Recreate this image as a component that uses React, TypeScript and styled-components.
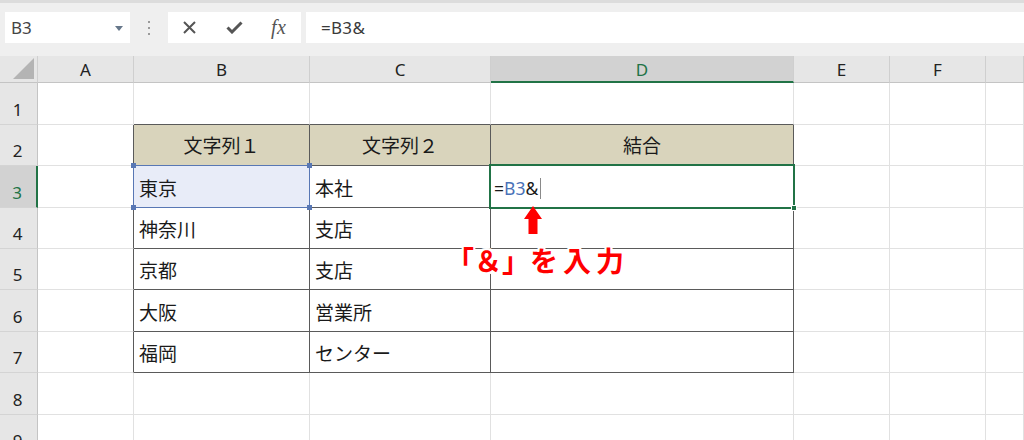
import React from "react";
import styled, { createGlobalStyle, css } from "styled-components";

const GlobalStyle = createGlobalStyle`
  html, body { margin: 0; padding: 0; background: #ffffff; overflow: hidden; }
  body { font-family: "Noto Sans", "Noto Sans CJK JP", sans-serif; width: 1024px; height: 440px; }
  * { box-sizing: border-box; }
`;

const Page = styled.div`
  position: relative;
  width: 1024px;
  height: 440px;
  overflow: hidden;
  background: #fff;
`;

const Toolbar = styled.div`
  height: 56px;
  background: #efefef;
  border-top: 3px solid #dcdcdc;
  display: flex;
  align-items: flex-start;
  padding-top: 9px;
  padding-left: 5px;
`;

const NameBox = styled.div`
  width: 125px;
  height: 31px;
  background: #fff;
  display: flex;
  align-items: center;
  justify-content: space-between;
  padding: 0 7px 0 6px;
  font-family: "Noto Sans", sans-serif;
  font-size: 17px;
  color: #444;
`;

const DropTri = styled.span`
  width: 0;
  height: 0;
  border-left: 4px solid transparent;
  border-right: 4px solid transparent;
  border-top: 5px solid #66778a;
  margin-top: 1px;
`;

const Dots = styled.div`
  width: 38px;
  height: 31px;
  display: flex;
  flex-direction: column;
  align-items: center;
  justify-content: center;
  gap: 4px;
`;

const Dot = styled.span`
  width: 2px;
  height: 2px;
  background: #9a9a9a;
`;

const FuncBox = styled.div`
  width: 133px;
  height: 31px;
  background: #fff;
  display: flex;
  align-items: center;
  padding-left: 14px;
`;

const FuncBtn = styled.div<{ $w: number }>`
  width: ${(p) => p.$w}px;
  height: 31px;
  display: flex;
  align-items: center;
  justify-content: flex-start;
  color: #555;
`;

const Fx = styled.span`
  font-family: "Liberation Serif", "DejaVu Serif", serif;
  font-style: italic;
  font-size: 20px;
  color: #555;
  margin-left: 2px;
  letter-spacing: 0.5px;
`;

const FormulaBox = styled.div`
  flex: 1;
  margin-left: 5px;
  height: 31px;
  background: #fff;
  display: flex;
  align-items: center;
  padding-left: 15px;
  font-family: "Noto Sans", sans-serif;
  font-size: 17px;
  letter-spacing: 0.3px;
  color: #3a3a3a;
`;

const Sheet = styled.div`
  display: grid;
  grid-template-columns: 38px 96px 176px 181px 303px 96px 96px 1fr;
  grid-template-rows: 27px 42px 41px 42px 41px 41px 42px 41px 42px 41px;
`;

const Corner = styled.div`
  background: #e6e6e6;
  border-right: 1px solid #d0d0d0;
  border-bottom: 1px solid #c4c4c4;
  position: relative;
`;

const CornerTri = styled.span`
  position: absolute;
  right: 3px;
  bottom: 3px;
  width: 0;
  height: 0;
  border-left: 21px solid transparent;
  border-bottom: 21px solid #b4b4b4;
`;

const ColHead = styled.div<{ $sel?: boolean }>`
  background: ${(p) => (p.$sel ? "#d2d2d2" : "#e6e6e6")};
  border-right: 1px solid #cfcfcf;
  border-bottom: ${(p) => (p.$sel ? "2px solid #217346" : "1px solid #c4c4c4")};
  display: flex;
  align-items: center;
  justify-content: center;
  padding-top: 1px;
  font-family: "Noto Sans", sans-serif;
  font-size: 17px;
  color: ${(p) => (p.$sel ? "#217346" : "#222")};
`;

const RowHead = styled.div<{ $sel?: boolean }>`
  background: ${(p) => (p.$sel ? "#d2d2d2" : "#e6e6e6")};
  border-right: ${(p) => (p.$sel ? "2px solid #217346" : "1px solid #c4c4c4")};
  border-bottom: 1px solid #d4d4d4;
  display: flex;
  align-items: flex-end;
  justify-content: center;
  padding-bottom: 3px;
  padding-right: 2px;
  font-family: "Noto Sans", sans-serif;
  font-size: 17px;
  color: ${(p) => (p.$sel ? "#217346" : "#222")};
`;

const Cell = styled.div<{
  $right: string;
  $bottom: string;
  $bg?: string;
  $head?: boolean;
}>`
  position: relative;
  background: ${(p) => p.$bg || "#fff"};
  border-right: 1px solid ${(p) => p.$right};
  border-bottom: 1px solid ${(p) => p.$bottom};
  display: flex;
  align-items: ${(p) => (p.$head ? "center" : "flex-end")};
  justify-content: ${(p) => (p.$head ? "center" : "flex-start")};
  padding: ${(p) => (p.$head ? "0 5px 0 5px" : "0 5px 7px 5px")};
  font-family: "Noto Sans CJK JP", "Noto Sans", sans-serif;
  font-size: 19px;
  line-height: 1.25;
  color: #1a1a1a;
  white-space: nowrap;
`;

const RefFrame = styled.span`
  position: absolute;
  z-index: 2;
  left: -1px;
  top: -1px;
  right: -1px;
  bottom: -1px;
  border: 1px solid #5877b4;
  pointer-events: none;
`;

const RefHandle = styled.span<{ $pos: "tl" | "tr" | "bl" | "br" }>`
  position: absolute;
  z-index: 3;
  width: 5px;
  height: 5px;
  background: #5877b4;
  ${(p) => (p.$pos[0] === "t" ? css`top: -3px;` : css`bottom: -3px;`)}
  ${(p) => (p.$pos[1] === "l" ? css`left: -3px;` : css`right: -3px;`)}
`;

const ActiveFrame = styled.span`
  position: absolute;
  z-index: 2;
  left: -2px;
  top: -2px;
  right: -2px;
  bottom: -2px;
  border: 2px solid #217346;
  pointer-events: none;
`;

const FillHandle = styled.span`
  position: absolute;
  z-index: 3;
  right: -4px;
  bottom: -4px;
  width: 6px;
  height: 6px;
  background: #217346;
  border: 1px solid #fff;
`;

const Formula = styled.span`
  font-family: "Noto Sans", sans-serif;
  font-size: 17.5px;
  color: #1a1a1a;
  margin-left: -2px;
`;

const RefText = styled.span`
  color: #4a72b8;
`;

const Caret = styled.span`
  display: inline-block;
  width: 1px;
  height: 21px;
  background: #8a8a8a;
  margin-left: 2px;
  vertical-align: -4px;
`;

const Arrow = styled.svg`
  position: absolute;
  z-index: 5;
  left: 524px;
  top: 206px;
`;

const Note = styled.div`
  position: absolute;
  z-index: 5;
  left: 446px;
  top: 240px;
  font-family: "Noto Sans CJK JP", sans-serif;
  font-weight: 700;
  font-size: 28px;
  color: #ff0000;
  white-space: nowrap;
  text-shadow:
    2px 0 0 #fff, -2px 0 0 #fff, 0 2px 0 #fff, 0 -2px 0 #fff,
    2px 2px 0 #fff, -2px -2px 0 #fff, 2px -2px 0 #fff, -2px 2px 0 #fff;
`;

const NoteTail = styled.span`
  letter-spacing: 5px;
`;

const COLS = ["A", "B", "C", "D", "E", "F", "G"];
const ROWS = 9;
const HEADER_BG = "#d9d4bc";
const GRID = "#e1e1e1";
const DARK = "#5a5a5a";

const data: Record<string, string> = {
  B2: "文字列１",
  C2: "文字列２",
  D2: "結合",
  B3: "東京",
  C3: "本社",
  B4: "神奈川",
  C4: "支店",
  B5: "京都",
  C5: "支店",
  B6: "大阪",
  C6: "営業所",
  B7: "福岡",
  C7: "センター",
};

const inTable = (r: number, c: number) => r >= 2 && r <= 7 && c >= 1 && c <= 3;

function CrossIcon() {
  return (
    <svg width="15" height="15" viewBox="0 0 15 15">
      <path d="M2 2 L13 13 M13 2 L2 13" stroke="#555" strokeWidth="2" fill="none" />
    </svg>
  );
}

function CheckIcon() {
  return (
    <svg width="17" height="13" viewBox="0 0 17 13">
      <path d="M1.5 6.5 L6 11 L15.5 1.5" stroke="#555" strokeWidth="3" fill="none" strokeLinejoin="miter" />
    </svg>
  );
}

export default function App() {
  const cells: React.ReactNode[] = [];

  cells.push(
    <Corner key="corner">
      <CornerTri />
    </Corner>
  );
  COLS.forEach((c, i) =>
    cells.push(
      <ColHead key={"h" + c} $sel={c === "D"}>
        {i < 6 ? c : ""}
      </ColHead>
    )
  );

  for (let r = 1; r <= ROWS; r++) {
    cells.push(
      <RowHead key={"r" + r} $sel={r === 3}>
        {r}
      </RowHead>
    );
    COLS.forEach((col, c) => {
      const key = col + r;
      const right = inTable(r, c) || inTable(r, c + 1) ? DARK : GRID;
      const bottom = inTable(r, c) || inTable(r + 1, c) ? DARK : GRID;
      let bg: string | undefined;
      if (r === 2 && inTable(r, c)) bg = HEADER_BG;
      if (key === "B3") bg = "#e8ecf8";
      let content: React.ReactNode = data[key] || "";
      if (key === "D3") {
        content = (
          <Formula>
            =<RefText>B3</RefText>&amp;
            <Caret />
          </Formula>
        );
      }
      cells.push(
        <Cell key={key} $right={right} $bottom={bottom} $bg={bg} $head={r === 2 && inTable(r, c)}>
          {content}
          {key === "B3" && (
            <>
              <RefFrame />
              <RefHandle $pos="tl" />
              <RefHandle $pos="tr" />
              <RefHandle $pos="bl" />
              <RefHandle $pos="br" />
            </>
          )}
          {key === "D3" && (
            <>
              <ActiveFrame />
              <FillHandle />
            </>
          )}
        </Cell>
      );
    });
  }

  return (
    <Page>
      <GlobalStyle />
      <Toolbar>
        <NameBox>
          <span>B3</span>
          <DropTri />
        </NameBox>
        <Dots>
          <Dot />
          <Dot />
          <Dot />
        </Dots>
        <FuncBox>
          <FuncBtn $w={44}>
            <CrossIcon />
          </FuncBtn>
          <FuncBtn $w={43}>
            <CheckIcon />
          </FuncBtn>
          <FuncBtn $w={30}>
            <Fx>fx</Fx>
          </FuncBtn>
        </FuncBox>
        <FormulaBox>=B3&amp;</FormulaBox>
      </Toolbar>
      <Sheet>{cells}</Sheet>
      <Arrow width="18" height="28" viewBox="0 0 18 28">
        <polygon points="9,0 18,13 13.5,13 13.5,28 4.5,28 4.5,13 0,13" fill="#ff0000" />
      </Arrow>
      <Note>
        「＆」<NoteTail>を入力</NoteTail>
      </Note>
    </Page>
  );
}
